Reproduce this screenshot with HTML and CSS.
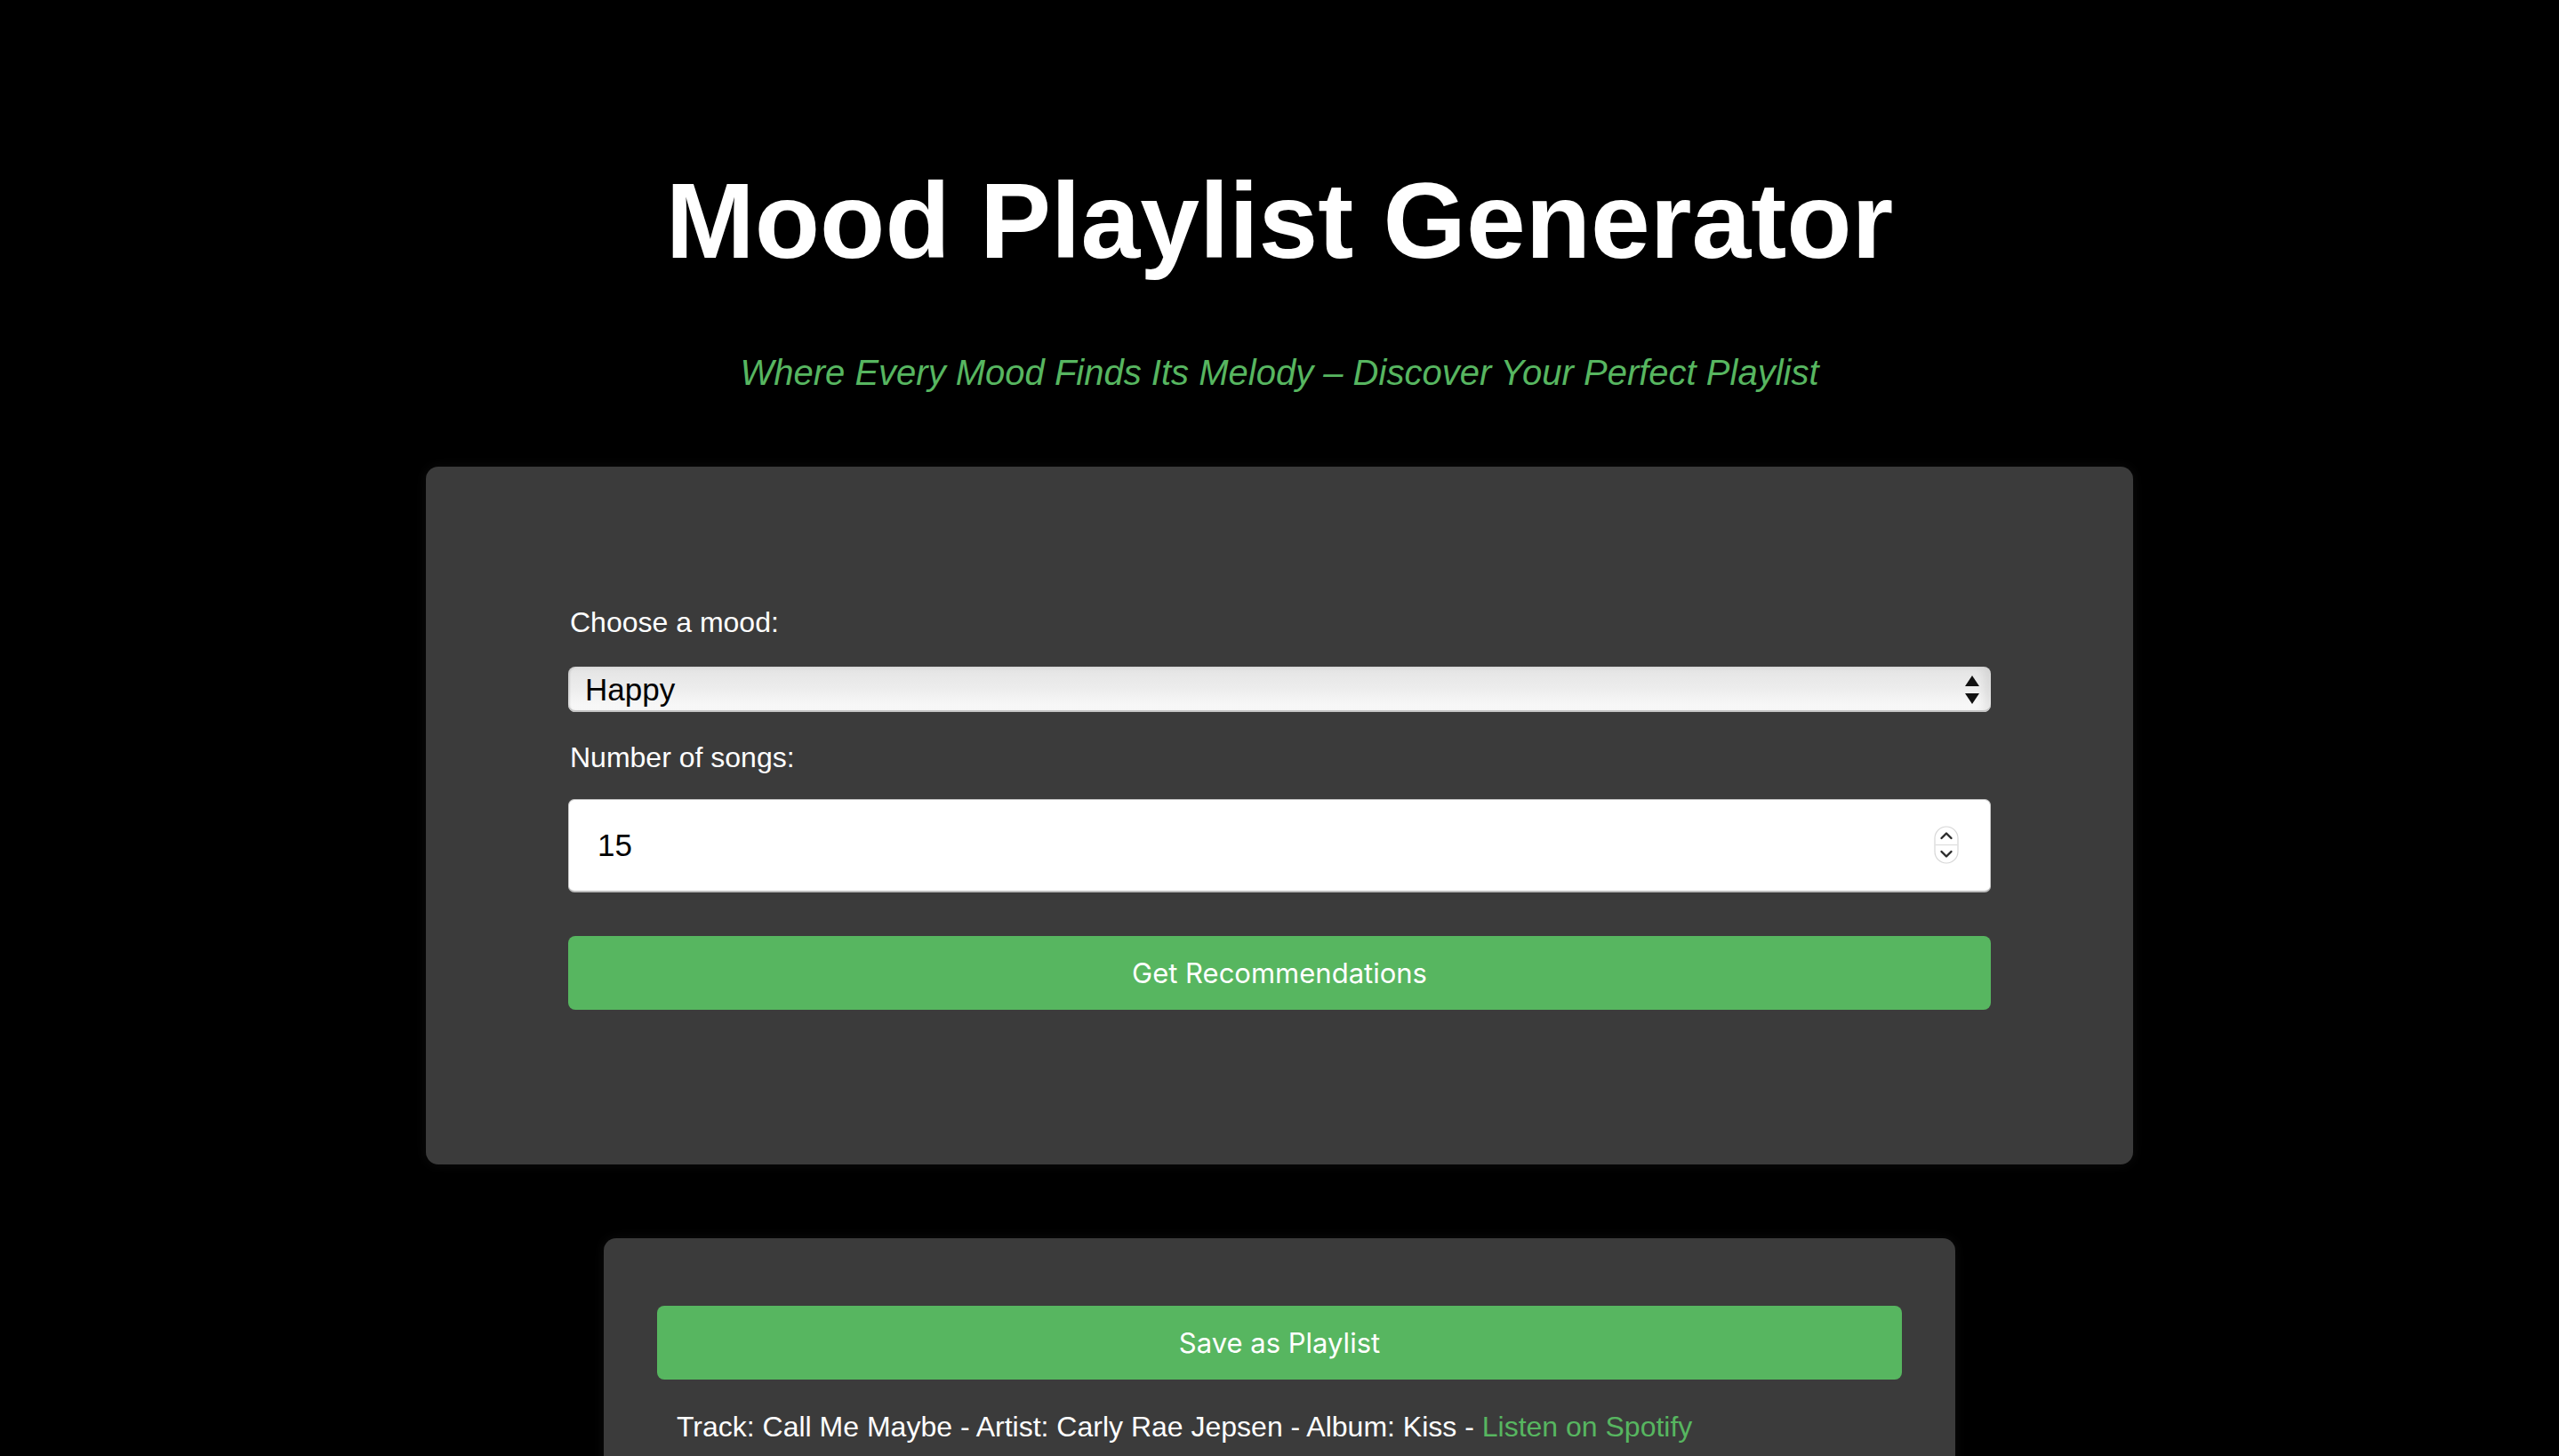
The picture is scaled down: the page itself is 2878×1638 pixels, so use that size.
FILE: index.html
```html
<!DOCTYPE html>
<html lang="en">
<head>
<meta charset="utf-8">
<title>Mood Playlist Generator</title>
<link rel="stylesheet" href="styles.css">
</head>
<body>
<header class="hero">
  <h1 class="hero-title">Mood Playlist Generator</h1>
  <p class="hero-tagline">Where Every Mood Finds Its Melody – Discover Your Perfect Playlist</p>
</header>

<main>
  <section class="card card-form">
    <form class="mood-form">
      <label class="field-label" for="mood">Choose a mood:</label>
      <div class="select-wrap">
        <select id="mood" class="mood-select">
          <option>Happy</option>
          <option>Sad</option>
          <option>Energetic</option>
          <option>Calm</option>
        </select>
        <svg class="select-arrows" width="16" height="33" viewBox="0 0 16 33" aria-hidden="true">
          <polygon points="8,0 16,12 0,12" fill="#111"/>
          <polygon points="0,20 16,20 8,32" fill="#111"/>
        </svg>
      </div>

      <label class="field-label" for="count">Number of songs:</label>
      <div class="number-wrap">
        <input id="count" class="number-input" type="number" value="15" min="1" max="50">
        <svg class="number-spin" width="28" height="43" viewBox="0 0 28 43" aria-hidden="true">
          <rect x="1" y="1" width="26" height="41" rx="13" fill="#fff" stroke="#d6d6d6" stroke-width="1.2"/>
          <line x1="1.5" y1="21.5" x2="26.5" y2="21.5" stroke="#dcdcdc" stroke-width="1.2"/>
          <polyline points="8.5,14 14,8.5 19.5,14" fill="none" stroke="#2a2a2a" stroke-width="2.4" stroke-linecap="round" stroke-linejoin="round"/>
          <polyline points="8.5,29 14,34.5 19.5,29" fill="none" stroke="#2a2a2a" stroke-width="2.4" stroke-linecap="round" stroke-linejoin="round"/>
        </svg>
      </div>

      <button type="button" class="btn btn-primary">Get Recommendations</button>
    </form>
  </section>

  <section class="card card-results">
    <button type="button" class="btn btn-primary">Save as Playlist</button>
    <ul class="track-list">
      <li class="track">Track: Call Me Maybe - Artist: Carly Rae Jepsen - Album: Kiss - <a class="track-link" href="#">Listen on Spotify</a></li>
    </ul>
  </section>
</main>
</body>
</html>
```

FILE: styles.css
```css
* {
  box-sizing: border-box;
}

html {
  background: #000;
}

body {
  margin: 0;
  background: #000;
  color: #fff;
  font-family: "Liberation Sans", Arial, Helvetica, sans-serif;
}

.hero {
  padding-top: 179px;
  text-align: center;
}

.hero-title {
  margin: 0;
  font-size: 120px;
  line-height: 138px;
  font-weight: 700;
  color: #fff;
}

.hero-tagline {
  margin: 79px 0 0;
  font-size: 40px;
  line-height: 46px;
  font-style: italic;
  color: #57b660;
}

.card {
  background: #3b3b3b;
  border-radius: 14px;
  box-shadow: 0 0 14px rgba(255, 255, 255, 0.05);
  margin-left: auto;
  margin-right: auto;
}

.card-form {
  width: 1920px;
  margin-top: 83px;
  padding: 157px 160px 174px;
}

.mood-form {
  display: flex;
  flex-direction: column;
}

.field-label {
  display: block;
  font-size: 32px;
  line-height: 37px;
  margin: 0 0 31px 2px;
  color: #fff;
}

.select-wrap {
  position: relative;
  margin-bottom: 33px;
}

.mood-select {
  display: block;
  width: 100%;
  height: 51px;
  -webkit-appearance: none;
  appearance: none;
  border: none;
  border-radius: 8px;
  padding: 0 0 0 19px;
  font-family: "Liberation Sans", Arial, sans-serif;
  font-size: 35px;
  color: #000;
  background: linear-gradient(to bottom, #e4e4e4 0%, #ececec 45%, #fbfbfb 100%);
  box-shadow: inset 0 -2px 0 #c4c4c4, inset 2px 0 2px rgba(0, 0, 0, 0.12), inset -8px 0 8px rgba(0, 0, 0, 0.07);
  outline: none;
}

.select-arrows {
  position: absolute;
  right: 13px;
  top: 10px;
  pointer-events: none;
}

.number-wrap {
  position: relative;
  margin-top: -3px;
  margin-bottom: 49px;
}

.number-input {
  display: block;
  width: 100%;
  height: 105px;
  border: 1px solid #c8c8c8;
  border-bottom: 2px solid #bdbdbd;
  border-radius: 7px;
  padding: 0 0 0 32px;
  font-family: "Liberation Sans", Arial, sans-serif;
  font-size: 35px;
  color: #000;
  background: #fff;
  -moz-appearance: textfield;
  appearance: textfield;
  outline: none;
}

.number-input::-webkit-outer-spin-button,
.number-input::-webkit-inner-spin-button {
  -webkit-appearance: none;
  margin: 0;
}

.number-spin {
  position: absolute;
  right: 36px;
  top: 30px;
  pointer-events: none;
}

.btn {
  display: block;
  width: 100%;
  height: 83px;
  border: none;
  border-radius: 8px;
  background: #57b660;
  color: #fff;
  font-family: Inter, "Liberation Sans", Arial, sans-serif;
  font-size: 31px;
  cursor: pointer;
}

.card-results {
  width: 1520px;
  margin-top: 83px;
  padding: 76px 60px 60px;
}

.track-list {
  list-style: none;
  margin: 35px 0 0;
  padding: 0 0 0 22px;
}

.track {
  font-size: 32px;
  line-height: 36px;
}

.track-link {
  color: #57b660;
  text-decoration: none;
}
```
